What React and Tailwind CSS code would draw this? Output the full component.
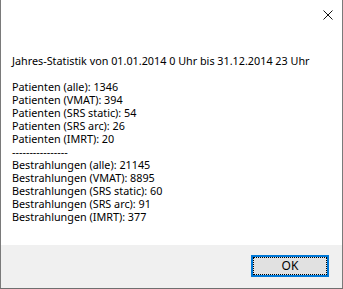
export default function App() {
  const lines = [
    'Jahres-Statistik von 01.01.2014 0 Uhr bis 31.12.2014 23 Uhr',
    '',
    'Patienten (alle): 1346',
    'Patienten (VMAT): 394',
    'Patienten (SRS static): 54',
    'Patienten (SRS arc): 26',
    'Patienten (IMRT): 20',
    '----------------',
    'Bestrahlungen (alle): 21145',
    'Bestrahlungen (VMAT): 8895',
    'Bestrahlungen (SRS static): 60',
    'Bestrahlungen (SRS arc): 91',
    'Bestrahlungen (IMRT): 377',
  ];

  return (
    <div className="flex h-[289px] w-[343px] flex-col bg-[#a0a0a0] font-['Noto_Sans',sans-serif] text-[10.8px] text-black">
      <div className="flex flex-1 flex-col border-x border-[#7a7a7a] bg-white">
        <div className="flex h-[30px] justify-end pr-[9px] pt-[10px]">
          <svg width="10" height="10" viewBox="0 0 10 10" className="block">
            <path d="M0.5 0.5 L9.5 9.5 M9.5 0.5 L0.5 9.5" stroke="#111" strokeWidth="1" fill="none" />
          </svg>
        </div>
        <div className="flex-1 pl-[11px] pt-[24px] leading-[13px]">
          {lines.map((line, i) => (
            <div key={i} className="h-[13px] whitespace-pre">
              {line}
            </div>
          ))}
        </div>
        <div className="flex h-[43px] justify-end bg-[#f0f0f0] pr-[13px] pt-[10px]">
          <button
            type="button"
            className="h-[22px] w-[78px] border-2 border-[#0078d7] bg-[#e1e1e1] p-0 text-[12px]"
          >
            <span className="flex h-full w-full items-center justify-center border border-dotted border-black leading-none">
              OK
            </span>
          </button>
        </div>
      </div>
      <div className="h-[1px] bg-[#6f6f6f]" />
    </div>
  );
}
